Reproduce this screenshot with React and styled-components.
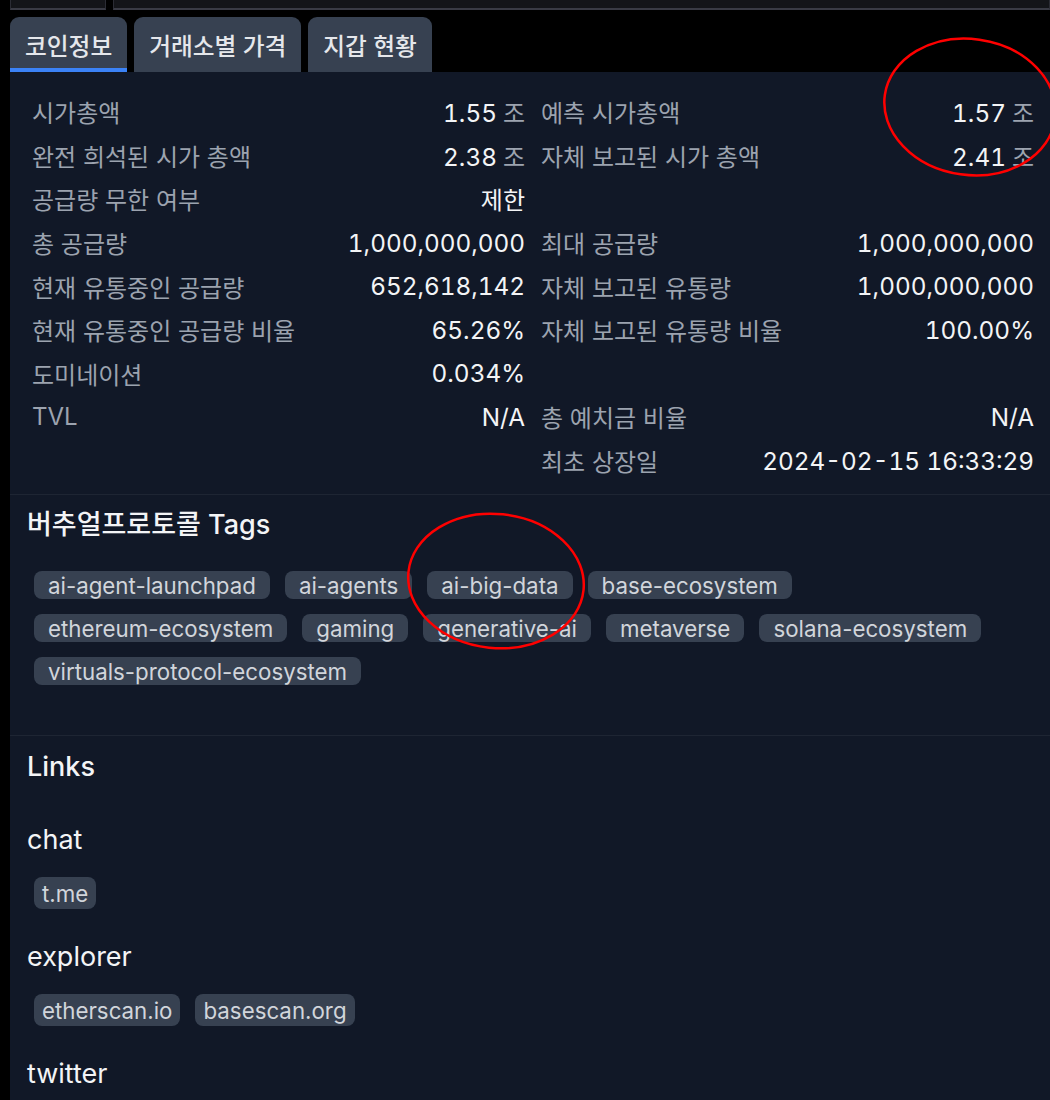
import React from "react";
import styled, { createGlobalStyle } from "styled-components";

const Global = createGlobalStyle`
  html, body { margin: 0; padding: 0; background: #000; overflow: hidden; }
  body { font-family: "Inter", "Noto Sans CJK KR", sans-serif; -webkit-font-smoothing: antialiased; }
  * { box-sizing: border-box; }
`;

const Page = styled.div`
  position: relative;
  width: 1050px;
  height: 1100px;
  background: #000;
  display: flex;
  flex-direction: column;
`;

const TopBar = styled.div`
  display: flex;
  gap: 7px;
  padding-left: 10px;
  height: 10px;
`;

const TopBox = styled.div`
  width: ${(p) => (p.$w ? `${p.$w}px` : "auto")};
  flex: ${(p) => (p.$w ? "none" : "1")};
  background: #141519;
  border: 1px solid #2b2c34;
  border-top: none;
  border-bottom: 2px solid #3a3b45;
`;

const TabRow = styled.div`
  display: flex;
  gap: 7px;
  padding-left: 10px;
  margin-top: 7px;
`;

const Tab = styled.div`
  height: 55px;
  padding: 0 15px;
  display: flex;
  align-items: center;
  background: #374151;
  border-radius: 9px 9px 0 0;
  color: #e5e7eb;
  font-size: 23.7px;
  font-weight: 500;
  box-shadow: ${(p) => (p.$active ? "inset 0 -4px 0 #3b82f6" : "none")};
`;

const Panel = styled.div`
  flex: 1;
  margin-left: 10px;
  background: #111827;
  display: flex;
  flex-direction: column;
`;

const StatsGrid = styled.div`
  display: grid;
  grid-template-columns: 1fr 1fr;
  column-gap: 16px;
  padding: 18px 16px 12px 22px;
  border-bottom: 1px solid #1e2533;
`;

const Row = styled.div`
  height: 43.6px;
  display: flex;
  align-items: center;
  justify-content: space-between;
`;

const Label = styled.span`
  color: #9ca3af;
  font-size: 24px;
`;

const Value = styled.span`
  color: #f3f4f6;
  white-space: nowrap;
  font-size: ${(p) => (p.$ko ? 24 : 24.3)}px;
  font-variant-numeric: tabular-nums;
`;

const Unit = styled.span`
  color: #9ca3af;
  font-size: 24px;
  margin-left: 6px;
`;

const Section = styled.div`
  padding: ${(p) => p.$pad};
  border-bottom: ${(p) => (p.$divider ? "1px solid #1e2533" : "none")};
`;

const Heading = styled.div`
  color: #f3f4f6;
  font-size: 27px;
  line-height: 34px;
  font-weight: 500;
`;

const SubHeading = styled.div`
  color: #f3f4f6;
  font-size: 27px;
  line-height: 34px;
  margin-top: ${(p) => p.$mt}px;
`;

const TagList = styled.div`
  display: flex;
  flex-wrap: wrap;
  gap: 15px 15px;
  margin-left: 7px;
  margin-top: ${(p) => p.$mt}px;
`;

const Tag = styled.span`
  display: inline-flex;
  align-items: center;
  height: ${(p) => (p.$compact ? 32 : 28)}px;
  padding: 0 ${(p) => (p.$compact ? 8 : 14)}px;
  background: #374151;
  border-radius: 8px;
  color: #d1d5db;
  font-size: 22.3px;
  white-space: nowrap;
`;

const Overlay = styled.svg`
  position: absolute;
  left: 0;
  top: 0;
  pointer-events: none;
`;

const stats = [
  [["시가총액", "1.55", "조"], ["예측 시가총액", "1.57", "조"]],
  [["완전 희석된 시가 총액", "2.38", "조"], ["자체 보고된 시가 총액", "2.41", "조"]],
  [["공급량 무한 여부", "제한", null, true], null],
  [["총 공급량", "1,000,000,000"], ["최대 공급량", "1,000,000,000"]],
  [["현재 유통중인 공급량", "652,618,142"], ["자체 보고된 유통량", "1,000,000,000"]],
  [["현재 유통중인 공급량 비율", "65.26%"], ["자체 보고된 유통량 비율", "100.00%"]],
  [["도미네이션", "0.034%"], null],
  [["TVL", "N/A"], ["총 예치금 비율", "N/A"]],
  [null, ["최초 상장일", "2024-02-15 16:33:29"]],
];

const tags = [
  "ai-agent-launchpad",
  "ai-agents",
  "ai-big-data",
  "base-ecosystem",
  "ethereum-ecosystem",
  "gaming",
  "generative-ai",
  "metaverse",
  "solana-ecosystem",
  "virtuals-protocol-ecosystem",
];

const links = [
  { name: "chat", items: ["t.me"] },
  { name: "explorer", items: ["etherscan.io", "basescan.org"] },
  { name: "twitter", items: [] },
];

function StatCell({ cell }) {
  if (!cell) return <Row />;
  const [label, value, unit, ko] = cell;
  return (
    <Row>
      <Label>{label}</Label>
      <Value $ko={ko}>
        {value}
        {unit && <Unit>{unit}</Unit>}
      </Value>
    </Row>
  );
}

export default function App() {
  return (
    <Page>
      <Global />
      <TopBar>
        <TopBox $w={96} />
        <TopBox />
      </TopBar>
      <TabRow>
        <Tab $active>코인정보</Tab>
        <Tab>거래소별 가격</Tab>
        <Tab>지갑 현황</Tab>
      </TabRow>
      <Panel>
        <StatsGrid>
          {stats.map((pair, i) => (
            <React.Fragment key={i}>
              <StatCell cell={pair[0]} />
              <StatCell cell={pair[1]} />
            </React.Fragment>
          ))}
        </StatsGrid>
        <Section $pad="13px 16px 50px 17px" $divider>
          <Heading>버추얼프로토콜 Tags</Heading>
          <TagList $mt={29}>
            {tags.map((t) => (
              <Tag key={t}>{t}</Tag>
            ))}
          </TagList>
        </Section>
        <Section $pad="14px 16px 0 17px">
          <Heading>Links</Heading>
          {links.map((g, i) => (
            <React.Fragment key={g.name}>
              <SubHeading $mt={i === 0 ? 39 : 31}>{g.name}</SubHeading>
              {g.items.length > 0 && (
                <TagList $mt={20}>
                  {g.items.map((it) => (
                    <Tag $compact key={it}>
                      {it}
                    </Tag>
                  ))}
                </TagList>
              )}
            </React.Fragment>
          ))}
        </Section>
      </Panel>
      <Overlay width="1050" height="1100" viewBox="0 0 1050 1100">
        <ellipse cx="970" cy="107" rx="86" ry="68" transform="rotate(8 970 107)" fill="none" stroke="#ff0000" strokeWidth="2.5" />
        <ellipse cx="496" cy="581" rx="88" ry="67" transform="rotate(6 496 581)" fill="none" stroke="#ff0000" strokeWidth="2.5" />
      </Overlay>
    </Page>
  );
}
